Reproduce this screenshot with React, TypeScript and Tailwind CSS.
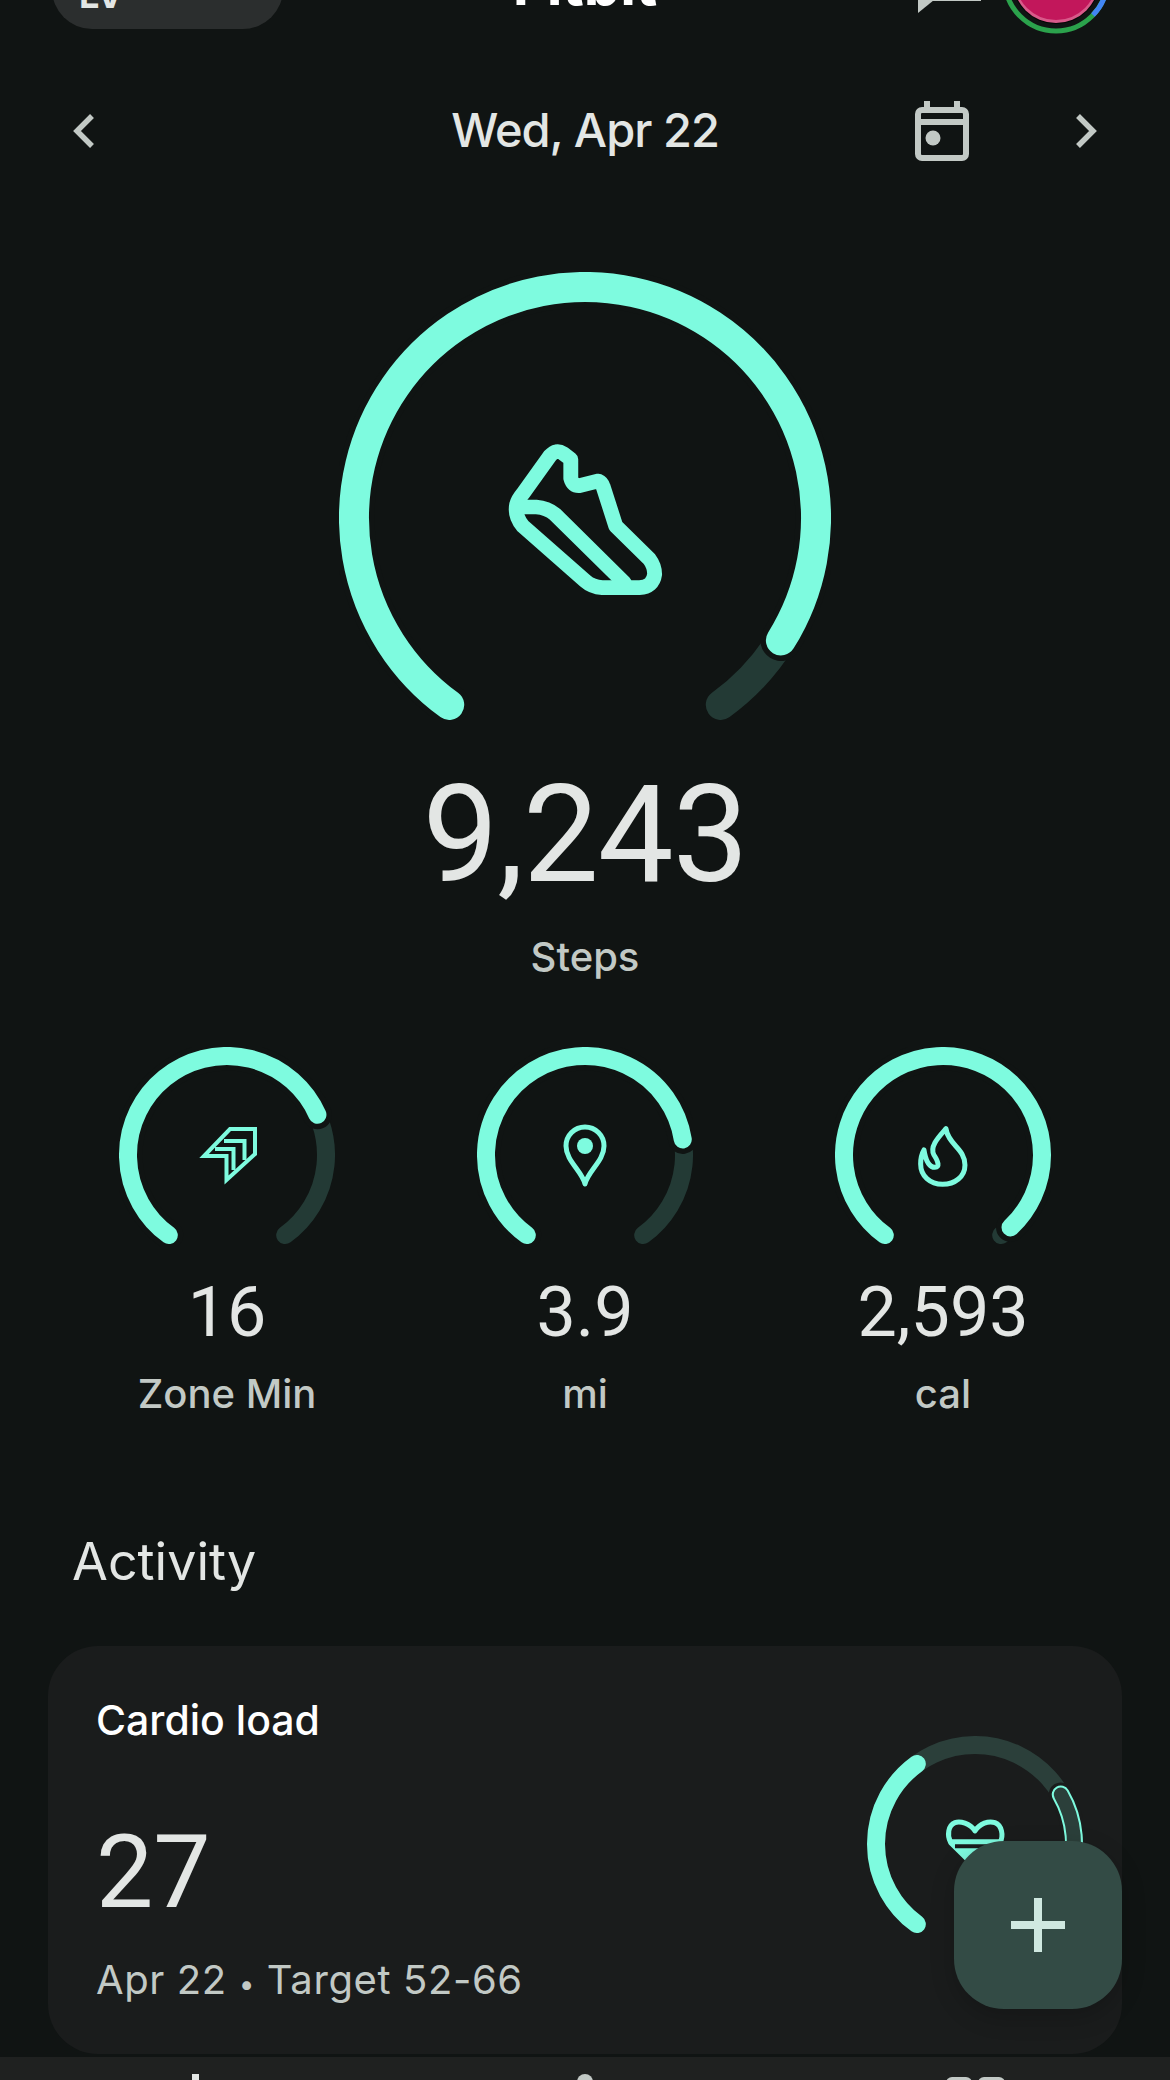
import type { ReactNode } from "react"

const TEAL = "#7efbdf"

const arc = (cx: number, cy: number, r: number, from: number, to: number) => {
    const pt = (a: number) => {
        const rad = (a * Math.PI) / 180
        return `${(cx + r * Math.sin(rad)).toFixed(2)} ${(cy - r * Math.cos(rad)).toFixed(2)}`
    }
    const large = to - from > 180 ? 1 : 0
    return `M ${pt(from)} A ${r} ${r} 0 ${large} 1 ${pt(to)}`
}

type GaugeProps = {
    cx: number
    cy: number
    r: number
    sw: number
    end: number
    box: string
    width: number
    height: number
    children?: ReactNode
}

const Gauge = ({ cx, cy, r, sw, end, box, width, height, children }: GaugeProps) => (
    <svg width={width} height={height} viewBox={box} fill="none" className="block shrink-0">
        <path d={arc(cx, cy, r, -144, 144)} stroke="#233a35" strokeWidth={sw} strokeLinecap="round" />
        <path d={arc(cx, cy, r, -144, end)} stroke="#101413" strokeWidth={sw + 11} strokeLinecap="round" />
        <path d={arc(cx, cy, r, -144, end)} stroke={TEAL} strokeWidth={sw} strokeLinecap="round" />
        {children}
    </svg>
)

const ShoeIcon = () => (
    <g transform="translate(320 251) scale(0.338 0.3333)" stroke={TEAL} strokeWidth="44" strokeLinejoin="round" strokeLinecap="round">
        <path d="M700 602 Q 708 600 720 608 L 742 625 L 742 682 Q 748 706 768 704 L 824 690 Q 834 694 838 708 L 875 825 L 975 925 Q 990 945 990 970 Q 985 1008 945 1010 L 835 1010 Q 805 1008 785 990 L 600 825 Q 575 795 582 760 Q 586 745 600 728 L 680 615 Q 690 604 700 602 Z" />
        <path d="M590 768 L 640 768 Q 672 770 695 790 L 900 995" />
    </g>
)

const ZoneIcon = () => (
    <g stroke={TEAL} strokeWidth="4" strokeLinejoin="miter">
        <path d="M230 1129 L255 1129 L255 1154 L226.5 1180 L226.5 1156 L204 1156 Z" />
        <path d="M224 1141 L244.5 1141 L244.5 1160" />
        <path d="M215 1149 L233.5 1149 L233.5 1170" />
    </g>
)

const PinIcon = () => (
    <g>
        <path d="M585 1184 C 582 1171 566 1161 566 1146 A 19 19 0 1 1 604 1146 C 604 1161 588 1171 585 1184 Z" stroke={TEAL} strokeWidth="5" strokeLinejoin="round" />
        <circle cx="585" cy="1146" r="8" fill={TEAL} />
    </g>
)

const FlameIcon = () => (
    <g transform="translate(640 1030) scale(0.3333)" stroke={TEAL} strokeWidth="15" strokeLinejoin="round">
        <path d="M918 296 C 925 345 975 355 975 405 C 975 440 945 463 908 463 C 870 463 842 438 842 402 C 842 385 846 370 852 360 C 856 385 866 412 885 412 C 900 412 895 395 882 375 C 868 350 895 322 918 296 Z" />
    </g>
)

const HeartIcon = () => (
    <g transform="translate(820 1700) scale(0.3333)" strokeLinejoin="round">
        <path d="M392 418 L540 418 L540 428 L465 500 L392 428 Z" fill={TEAL} />
        <path d="M465 393 C 450 370 420 362 405 368 C 385 376 380 405 392 428 L465 500 L540 428 C 552 405 545 376 525 368 C 505 362 480 370 465 393 Z" stroke={TEAL} strokeWidth="15" />
        <path d="M405 439 L528 439" stroke="#1a1c1c" strokeWidth="12" />
    </g>
)

const stats = [
    { label: "Zone Min", value: "16", cx: 227, end: 66, icon: <ZoneIcon /> },
    { label: "mi", value: "3.9", cx: 585, end: 81, icon: <PinIcon /> },
    { label: "cal", value: "2,593", cx: 943, end: 137, icon: <FlameIcon /> },
]

const App = () => {
    return (
        <div className="relative h-[2080px] w-[1170px] overflow-hidden bg-[#101413] font-['Inter',sans-serif] text-[#e3e6e4]">
            <div className="flex h-[34px] items-end justify-between pl-[52px] pr-[63px]">
                <div className="mb-[5px] flex h-[80px] w-[231px] shrink-0 items-end rounded-[40px] bg-[#2b2e2e] pl-[27px] text-[36px] leading-[34px] font-bold">
                    <span className="-mb-[5px] translate-y-[-22px]">LV</span>
                </div>
                <div className="absolute left-0 right-0 top-[-46px] text-center text-[58px] leading-[60px] font-bold text-white">Fitbit</div>
                <div className="flex items-end gap-[24px]">
                    <svg width="63" height="34" viewBox="0 0 63 34" fill="none" className="mb-[21px] shrink-0">
                        <path d="M0 34 L0 18 L16 18 L16 21 Z" fill="#c2c9c5" />
                        <path d="M14 20.5 H63" stroke="#c2c9c5" strokeWidth="3" />
                    </svg>
                    <svg width="102" height="108" viewBox="0 0 102 108" fill="none" className="shrink-0">
                        <circle cx="51" cy="54" r="51" stroke="#2ba24c" strokeWidth="5" />
                        <path d="M1 42 A 51 51 0 0 1 51 3 A 51 51 0 0 1 99 38" stroke="#ea4335" strokeWidth="5" />
                        <path d="M2 40 A 51 51 0 0 0 1.6 46" stroke="#f9ab00" strokeWidth="5" />
                        <path d="M101 40 A 51 51 0 0 1 88 89" stroke="#4285f4" strokeWidth="5" />
                        <circle cx="51" cy="54" r="44" fill="#050505" />
                        <circle cx="51" cy="54" r="43" fill="#d85a8a" />
                        <circle cx="51" cy="53" r="41" fill="#c2175b" />
                    </svg>
                </div>
            </div>

            <div className="mt-[66px] grid h-[62px] grid-cols-[1fr_auto_1fr] items-center px-[73px]">
                <svg width="22" height="34" viewBox="0 0 22 34" fill="none">
                    <path d="M19 2 L4 17 L19 32" stroke="#c2c9c5" strokeWidth="5.5" />
                </svg>
                <div className="-mt-[3px] text-[47px] leading-[62px] font-medium tracking-[-1px]">Wed, Apr 22</div>
                <div className="flex items-center justify-end gap-[106px]">
                    <svg width="54" height="60" viewBox="0 0 54 60" fill="none">
                        <path d="M9 0 V8 M39 0 V8" transform="translate(3 0)" stroke="#c2c9c5" strokeWidth="6" />
                        <rect x="3" y="9" width="48" height="48" rx="4" stroke="#c2c9c5" strokeWidth="6" />
                        <path d="M3 21 H51" stroke="#c2c9c5" strokeWidth="6" />
                        <circle cx="18" cy="37" r="7.5" fill="#c2c9c5" />
                    </svg>
                    <svg width="22" height="34" viewBox="0 0 22 34" fill="none">
                        <path d="M3 2 L18 17 L3 32" stroke="#c2c9c5" strokeWidth="5.5" />
                    </svg>
                </div>
            </div>

            <div className="mt-[110px] flex flex-col items-center">
                <Gauge cx={585} cy={518} r={231} sw={30} end={122} box="339 272 492 448" width={492} height={448}>
                    <ShoeIcon />
                </Gauge>
                <div className="mt-[55px] font-['Roboto',sans-serif] text-[135px] leading-[120px] font-normal tracking-[-1px]">9,243</div>
                <div className="mt-[40px] text-[40px] leading-[44px] font-medium text-[#c2c9c5]">Steps</div>
            </div>

            <div className="mt-[68px] grid grid-cols-3 px-[48px]">
                {stats.map(stat => (
                    <div key={stat.label} className="flex flex-col items-center">
                        <Gauge cx={stat.cx} cy={1155} r={99} sw={18} end={stat.end} box={`${stat.cx - 108} 1047 216 200`} width={216} height={200}>
                            {stat.icon}
                        </Gauge>
                        <div className="mt-[25px] font-['Roboto',sans-serif] text-[70px] leading-[80px]">{stat.value}</div>
                        <div className="mt-[20px] text-[40px] leading-[44px] font-medium text-[#c2c9c5]">{stat.label}</div>
                    </div>
                ))}
            </div>

            <div className="mt-[116px] pl-[72px] text-[52px] leading-[60px]">Activity</div>

            <div className="mx-[48px] mt-[54px] flex h-[408px] justify-between rounded-[50px] bg-[#1a1c1c] pl-[48px] pr-[39px] pt-[50px]">
                <div>
                    <div className="text-[41px] leading-[48px] font-medium text-white">Cardio load</div>
                    <div className="mt-[73px] font-['Roboto',sans-serif] text-[102px] leading-[110px]">27</div>
                    <div className="mt-[29px] text-[40px] leading-[48px] tracking-[0.6px] text-[#c2c9c5]">Apr 22 <span className="text-[28px]">•</span> Target 52-66</div>
                </div>
                <svg width="216" height="200" viewBox="867 1736 216 200" fill="none" className="mt-[40px] block shrink-0">
                    <path d={arc(975, 1844, 99, -144, 144)} stroke="#2b3f3a" strokeWidth="18" strokeLinecap="round" />
                    <path d={arc(975, 1844, 99, -144, -36)} stroke={TEAL} strokeWidth="18" strokeLinecap="round" />
                    <path d={arc(975, 1844, 99, 60, 110)} stroke="#1a1c1c" strokeWidth="24" strokeLinecap="round" />
                    <path d={arc(975, 1844, 99, 60, 110)} stroke={TEAL} strokeWidth="18" strokeLinecap="round" />
                    <path d={arc(975, 1844, 99, 60, 110)} stroke="#2b3f3a" strokeWidth="14" strokeLinecap="round" />
                    <HeartIcon />
                </svg>
            </div>

            <div className="mt-[3px] grid grid-cols-3 bg-[#1f2120] pt-[17px]">
                <div className="flex justify-center">
                    <div className="h-[20px] w-[7px] bg-[#e3e6e4]" />
                </div>
                <div className="flex justify-center">
                    <div className="h-[20px] w-[16px] rounded-t-full bg-[#c2c9c5]" />
                </div>
                <div className="flex justify-center gap-[6px] pt-[3px]">
                    <div className="h-[20px] w-[26px] rounded-t-[6px] bg-[#c2c9c5]" />
                    <div className="h-[20px] w-[27px] rounded-t-[6px] bg-[#c2c9c5]" />
                </div>
            </div>

            <div className="absolute right-[48px] top-[1841px] flex h-[168px] w-[168px] items-center justify-center rounded-[50px] bg-[#334b45] shadow-[0_8px_24px_rgba(0,0,0,0.2)]">
                <svg width="54" height="54" viewBox="0 0 54 54" fill="none">
                    <path d="M27 0 V54 M0 27 H54" stroke="#cfe8e0" strokeWidth="8" />
                </svg>
            </div>
        </div>
    )
}

export default App
